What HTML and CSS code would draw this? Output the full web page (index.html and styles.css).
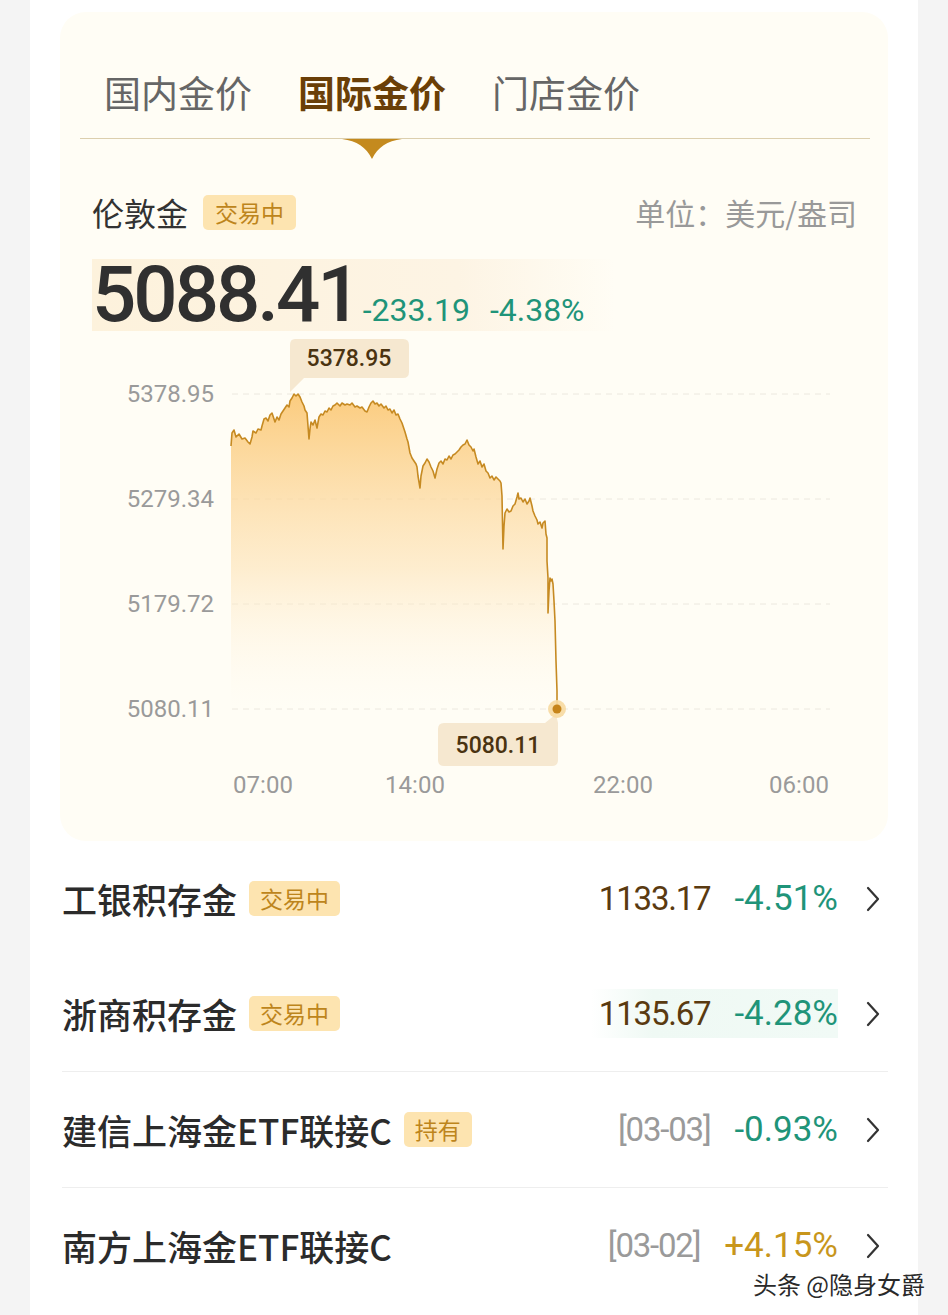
FILE: index.html
```html
<!DOCTYPE html>
<html lang="zh-CN">
<head>
    <meta charset="UTF-8">
    <meta name="viewport" content="width=device-width, initial-scale=1.0">
    <title>国际金价</title>
    <link rel="stylesheet" href="styles.css">
</head>
<body>
    <div class="page">
        <section class="card">
            <!-- tab bar -->
            <nav class="tabs">
                <span class="tab">国内金价</span>
                <span class="tab active">国际金价
                    <svg class="pointer" width="60" height="20" viewBox="0 0 60 20"><path d="M0 0 H60 C45 2 36 8 30 20 C24 8 15 2 0 0 Z" fill="#c48a1e"/></svg>
                </span>
                <span class="tab">门店金价</span>
            </nav>

            <div class="quote-head">
                <span class="quote-name">伦敦金</span>
                <span class="badge">交易中</span>
                <span class="unit">单位：美元/盎司</span>
            </div>

            <div class="price-row">
                <span class="price">5088.41</span>
                <span class="change">-233.19</span>
                <span class="change">-4.38%</span>
            </div>

            <!-- intraday chart, drawn in page coordinates -->
            <svg class="chart" width="790" height="470" viewBox="80 335 790 470">
                <defs>
                    <linearGradient id="area" x1="0" y1="393" x2="0" y2="708" gradientUnits="userSpaceOnUse">
                        <stop offset="0" stop-color="#fbc978" stop-opacity="0.95"/>
                        <stop offset="0.55" stop-color="#fde2b4" stop-opacity="0.6"/>
                        <stop offset="1" stop-color="#fff7e8" stop-opacity="0"/>
                    </linearGradient>
                </defs>
                <g class="grid">
                    <line x1="232" y1="393" x2="830" y2="393"/>
                    <line x1="232" y1="498" x2="830" y2="498"/>
                    <line x1="232" y1="603" x2="830" y2="603"/>
                    <line x1="232" y1="708" x2="830" y2="708"/>
                </g>
                <g class="axis-y">
                    <text x="214" y="401">5378.95</text>
                    <text x="214" y="506">5279.34</text>
                    <text x="214" y="611">5179.72</text>
                    <text x="214" y="716">5080.11</text>
                </g>
                <g class="axis-x">
                    <text x="263" y="792">07:00</text>
                    <text x="415" y="792">14:00</text>
                    <text x="623" y="792">22:00</text>
                    <text x="799" y="792">06:00</text>
                </g>
                <polygon class="area" points="231,708 231,445 232,432 234,429 236,436 239,433 242,438 245,437 248,441 250,443 252,436 253,430 256,432 258,428 261,429 262,425 264,418 266,417 268,420 270,414 272,412 274,418 275,421 277,416 279,419 281,413 283,410 285,407 287,404 289,406 290,400 292,397 294,393 296,395 298,393 300,396 302,401 304,405 305,409 307,412 308,425 309,438 310,428 311,421 313,424 315,419 317,427 319,416 321,413 323,414 325,410 327,411 329,407 331,409 333,405 335,404 337,402 340,405 342,402 345,404 347,403 350,404 352,402 355,406 357,405 360,407 362,406 365,410 367,411 369,406 371,402 373,400 375,403 377,402 379,405 381,403 384,407 386,405 388,409 390,408 392,412 394,409 396,414 398,413 400,418 402,422 404,428 405,431 407,438 408,441 410,452 412,457 414,460 416,463 417,466 418,475 420,487 421,475 423,465 425,462 427,458 429,461 431,466 433,470 435,477 437,468 439,462 441,460 443,463 445,458 447,459 449,455 451,458 453,454 455,453 457,451 459,449 461,446 463,444 465,443 467,439 469,444 471,446 473,450 474,448 476,456 478,463 480,460 482,466 484,463 486,470 488,472 490,477 492,475 494,479 496,476 498,478 500,480 501,482 502,495 503,548 504,525 505,512 507,508 509,511 511,510 513,505 515,503 517,496 518,492 519,498 521,497 523,501 525,498 527,503 529,500 530,497 532,505 533,510 535,515 537,519 538,523 540,521 542,527 543,522 545,520 546,533 547,537 547,560 548,577 548,612 549,590 550,577 551,580 552,578 553,583 554,600 555,620 556,660 557,690 557,708"/>
                <polyline class="line" points="231,445 232,432 234,429 236,436 239,433 242,438 245,437 248,441 250,443 252,436 253,430 256,432 258,428 261,429 262,425 264,418 266,417 268,420 270,414 272,412 274,418 275,421 277,416 279,419 281,413 283,410 285,407 287,404 289,406 290,400 292,397 294,393 296,395 298,393 300,396 302,401 304,405 305,409 307,412 308,425 309,438 310,428 311,421 313,424 315,419 317,427 319,416 321,413 323,414 325,410 327,411 329,407 331,409 333,405 335,404 337,402 340,405 342,402 345,404 347,403 350,404 352,402 355,406 357,405 360,407 362,406 365,410 367,411 369,406 371,402 373,400 375,403 377,402 379,405 381,403 384,407 386,405 388,409 390,408 392,412 394,409 396,414 398,413 400,418 402,422 404,428 405,431 407,438 408,441 410,452 412,457 414,460 416,463 417,466 418,475 420,487 421,475 423,465 425,462 427,458 429,461 431,466 433,470 435,477 437,468 439,462 441,460 443,463 445,458 447,459 449,455 451,458 453,454 455,453 457,451 459,449 461,446 463,444 465,443 467,439 469,444 471,446 473,450 474,448 476,456 478,463 480,460 482,466 484,463 486,470 488,472 490,477 492,475 494,479 496,476 498,478 500,480 501,482 502,495 503,548 504,525 505,512 507,508 509,511 511,510 513,505 515,503 517,496 518,492 519,498 521,497 523,501 525,498 527,503 529,500 530,497 532,505 533,510 535,515 537,519 538,523 540,521 542,527 543,522 545,520 546,533 547,537 547,560 548,577 548,612 549,590 550,577 551,580 552,578 553,583 554,600 555,620 556,660 557,690 557,708"/>

                <!-- high / low tips -->
                <g class="tip">
                    <path d="M295 338 H403 Q409 338 409 344 V371 Q409 377 403 377 H304 L290 391 L290 344 Q290 338 295 338 Z"/>
                    <text x="349" y="365">5378.95</text>
                </g>
                <g class="tip">
                    <path d="M444 722 H545 L556 713 L558 722 V759 Q558 765 552 765 H444 Q438 765 438 759 V728 Q438 722 444 722 Z"/>
                    <text x="498" y="752">5080.11</text>
                </g>
                <circle cx="557" cy="708" r="9" fill="#f7d9a0" fill-opacity="0.9"/>
                <circle cx="557" cy="708" r="4.5" fill="#c6841a"/>
            </svg>
        </section>

        <ul class="fund-list">
            <li class="fund-row">
                <span class="fund-name">工银积存金</span>
                <span class="badge big">交易中</span>
                <span class="fund-right">
                    <span class="fund-vals">
                        <span class="fund-num brown">1133.17</span>
                        <span class="fund-chg down">-4.51%</span>
                    </span>
                    <svg class="chevron" width="14" height="26" viewBox="0 0 14 26"><path d="M2 2 L12 13 L2 24" fill="none" stroke="#333" stroke-width="2.2" stroke-linecap="round" stroke-linejoin="round"/></svg>
                </span>
            </li>
            <li class="fund-row">
                <span class="fund-name">浙商积存金</span>
                <span class="badge big">交易中</span>
                <span class="fund-right">
                    <span class="fund-vals flash">
                        <span class="fund-num brown">1135.67</span>
                        <span class="fund-chg down">-4.28%</span>
                    </span>
                    <svg class="chevron" width="14" height="26" viewBox="0 0 14 26"><path d="M2 2 L12 13 L2 24" fill="none" stroke="#333" stroke-width="2.2" stroke-linecap="round" stroke-linejoin="round"/></svg>
                </span>
            </li>
            <li class="fund-row split">
                <span class="fund-name">建信上海金ETF联接C</span>
                <span class="badge big">持有</span>
                <span class="fund-right">
                    <span class="fund-vals">
                        <span class="fund-num gray">[03-03]</span>
                        <span class="fund-chg down">-0.93%</span>
                    </span>
                    <svg class="chevron" width="14" height="26" viewBox="0 0 14 26"><path d="M2 2 L12 13 L2 24" fill="none" stroke="#333" stroke-width="2.2" stroke-linecap="round" stroke-linejoin="round"/></svg>
                </span>
            </li>
            <li class="fund-row split">
                <span class="fund-name">南方上海金ETF联接C</span>
                <span class="fund-right">
                    <span class="fund-vals">
                        <span class="fund-num gray">[03-02]</span>
                        <span class="fund-chg up">+4.15%</span>
                    </span>
                    <svg class="chevron" width="14" height="26" viewBox="0 0 14 26"><path d="M2 2 L12 13 L2 24" fill="none" stroke="#333" stroke-width="2.2" stroke-linecap="round" stroke-linejoin="round"/></svg>
                </span>
            </li>
        </ul>
    </div>

    <div class="watermark">头条 @隐身女爵</div>
</body>
</html>
```

FILE: styles.css
```css
body {
    margin: 0;
    padding: 0;
    background-color: #f4f4f4;
    font-family: "Noto Sans CJK SC", "Noto Sans", sans-serif;
    color: #333;
    position: relative;
    min-height: 1315px;
    overflow: hidden;
}

.page {
    width: 888px;
    min-height: 1315px;
    margin: 0 auto;
    background-color: #fff;
    padding-top: 12px;
    box-sizing: border-box;
}

.card {
    margin: 0 30px;
    padding: 56px 18px 35px 20px;
    background-color: #fffdf5;
    border-radius: 26px;
}

/* tabs */
.tabs {
    display: flex;
    gap: 46px;
    padding: 0 24px 22px;
    border-bottom: 1px solid #dccfae;
}

.tab {
    font-size: 37px;
    line-height: 48px;
    color: #666;
    position: relative;
}

.tab.active {
    color: #6a3f07;
    font-weight: 700;
}

.tab .pointer {
    position: absolute;
    left: 50%;
    top: 71px;
    margin-left: -30px;
}

/* quote header */
.quote-head {
    display: flex;
    align-items: center;
    height: 42px;
    margin-top: 52px;
    padding: 0 13px 0 12px;
}

.quote-name {
    font-size: 32px;
    color: #333;
}

.badge {
    margin-left: 15px;
    padding: 0 12px;
    height: 35px;
    line-height: 35px;
    font-size: 23px;
    color: #bd851c;
    background-color: #fde4b0;
    border-radius: 5px;
}

.badge.big {
    margin-left: 12px;
    padding: 0 11px;
}

.unit {
    margin-left: auto;
    font-size: 30px;
    color: #999;
}

/* price */
.price-row {
    display: inline-flex;
    align-items: baseline;
    margin: 26px 0 0 12px;
    height: 72px;
    padding-right: 30px;
    background: linear-gradient(to right, #fdf2dc 0%, #fdf4e4 70%, rgba(255, 253, 245, 0) 100%);
}

.price {
    font-family: Roboto, "Liberation Sans", sans-serif;
    font-size: 78px;
    font-weight: 500;
    line-height: 72px;
    letter-spacing: -3px;
    color: #303030;
}

.change {
    font-family: Roboto, "Liberation Sans", sans-serif;
    font-size: 32px;
    color: #1f9479;
    margin-left: 20px;
}

.price + .change {
    margin-left: 4px;
}

/* chart */
.chart {
    display: block;
    margin-top: 5px;
    font-family: Roboto, "Liberation Sans", sans-serif;
}

.chart .grid line {
    stroke: #ece8df;
    stroke-width: 1;
    stroke-dasharray: 6 5;
}

.chart .axis-y text {
    font-size: 24px;
    fill: #9a9a9a;
    text-anchor: end;
}

.chart .axis-x text {
    font-size: 24px;
    fill: #9a9a9a;
    text-anchor: middle;
}

.chart .area {
    fill: url(#area);
}

.chart .line {
    fill: none;
    stroke: #c68a22;
    stroke-width: 1.6;
    stroke-linejoin: round;
}

.chart .tip path {
    fill: #f6e8d0;
}

.chart .tip text {
    font-size: 23px;
    font-weight: 500;
    fill: #4a3310;
    text-anchor: middle;
}

/* fund list */
.fund-list {
    list-style: none;
    margin: 0 30px 0 32px;
    padding: 0;
}

.fund-row {
    display: flex;
    align-items: center;
    height: 115px;
    padding-right: 8px;
}

.fund-row.split {
    border-top: 1px solid #eeeeee;
}

.fund-name {
    font-size: 35px;
    font-weight: 500;
    color: #2b2b2b;
}

.fund-right {
    margin-left: auto;
    display: flex;
    align-items: center;
}

.fund-vals {
    display: flex;
    align-items: baseline;
    padding: 4px 0 4px 8px;
}

.fund-vals.flash {
    background: linear-gradient(to right, rgba(240, 250, 245, 0) 0%, #eff9f4 25%, #f1faf6 100%);
}

.fund-num {
    font-family: Roboto, "Liberation Sans", sans-serif;
    font-size: 33px;
    letter-spacing: -1.2px;
}

.fund-chg {
    font-family: Roboto, "Liberation Sans", sans-serif;
    font-size: 35px;
    margin-left: 24px;
}

.brown { color: #5a3a10; }
.gray { color: #9a9a9a; }
.down { color: #1f9479; }
.up { color: #c8961c; }

.chevron {
    margin-left: 28px;
}

.watermark {
    position: absolute;
    right: 23px;
    top: 1266px;
    font-size: 24px;
    color: #2a2a2a;
    text-shadow: 0 0 2px #fff, 0 0 2px #fff, 0 0 3px #fff;
}
```
